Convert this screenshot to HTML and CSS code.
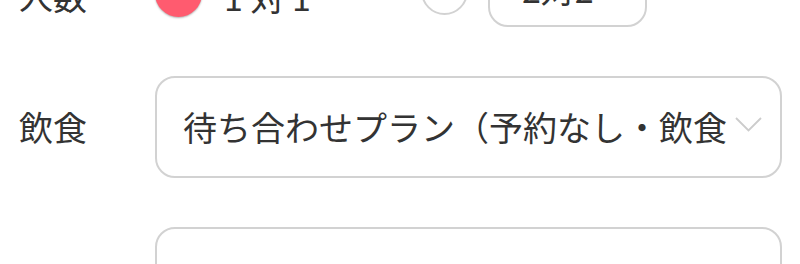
FILE: index.html
```html
<!DOCTYPE html>
<html lang="ja">
<head>
<meta charset="utf-8">
<link rel="stylesheet" href="styles.css">
</head>
<body>
<form class="form">
  <div class="row row-count">
    <div class="label">人数</div>
    <div class="field options">
      <label class="option">
        <span class="radio radio-on"></span>
        <span class="option-text">1 対 1</span>
      </label>
      <label class="option option-second">
        <span class="radio"></span>
        <span class="pill">2対2</span>
      </label>
    </div>
  </div>
  <div class="row">
    <div class="label">飲食</div>
    <div class="field">
      <div class="select">
        <span class="select-text">待ち合わせプラン（予約なし・飲食なし）</span>
        <svg class="chevron" width="27" height="15" viewBox="0 0 27 15"><path d="M1 1 L13.5 13.5 L26 1" fill="none" stroke="#cccccc" stroke-width="1.8"/></svg>
      </div>
    </div>
  </div>
  <div class="row">
    <div class="label"></div>
    <div class="field">
      <div class="box"></div>
    </div>
  </div>
</form>
</body>
</html>
```
FILE: styles.css
```css
* { box-sizing: border-box; }
html, body { margin: 0; padding: 0; background: #ffffff; }
body {
  font-family: "Noto Sans CJK JP", "Noto Sans", sans-serif;
  color: #333333;
  font-size: 34px;
  overflow: hidden;
}
.form {
  display: flex;
  flex-direction: column;
  gap: 49px;
  margin-top: -41px;
}
.row {
  display: flex;
  align-items: center;
}
.label {
  width: 155px;
  padding-left: 19px;
  line-height: 44px;
  flex: none;
}
.row-count .label { padding-top: 6px; }
.field {
  width: 627px;
  flex: none;
}
.options {
  display: flex;
  align-items: center;
}
.option {
  display: flex;
  align-items: center;
}
.option-second { margin-left: 110px; }
.radio {
  width: 47px;
  height: 47px;
  border-radius: 50%;
  border: 2px solid #d2d2d2;
  background: #fff;
  flex: none;
  margin-top: -4px;
}
.radio-on {
  background: #ff5b6f;
  border: none;
  box-shadow: 0 1px 2px rgba(0,0,0,0.3);
  margin-top: 0;
}
.option-text {
  margin-left: 22px;
  line-height: 44px;
  padding-top: 8px;
}
.pill {
  margin-left: 20px;
  width: 159px;
  height: 68px;
  border: 2px solid #d2d2d2;
  border-radius: 20px;
  padding: 6px 32px 14px;
  line-height: 44px;
}
.select {
  display: flex;
  align-items: center;
  height: 102px;
  border: 2px solid #d2d2d2;
  border-radius: 20px;
  padding: 0 18px 0 26px;
}
.select-text {
  flex: 1;
  white-space: nowrap;
  overflow: hidden;
  line-height: 44px;
}
.chevron {
  flex: none;
  margin-left: 8px;
  margin-top: -6px;
}
.box {
  height: 102px;
  border: 2px solid #d2d2d2;
  border-radius: 20px;
}
```
